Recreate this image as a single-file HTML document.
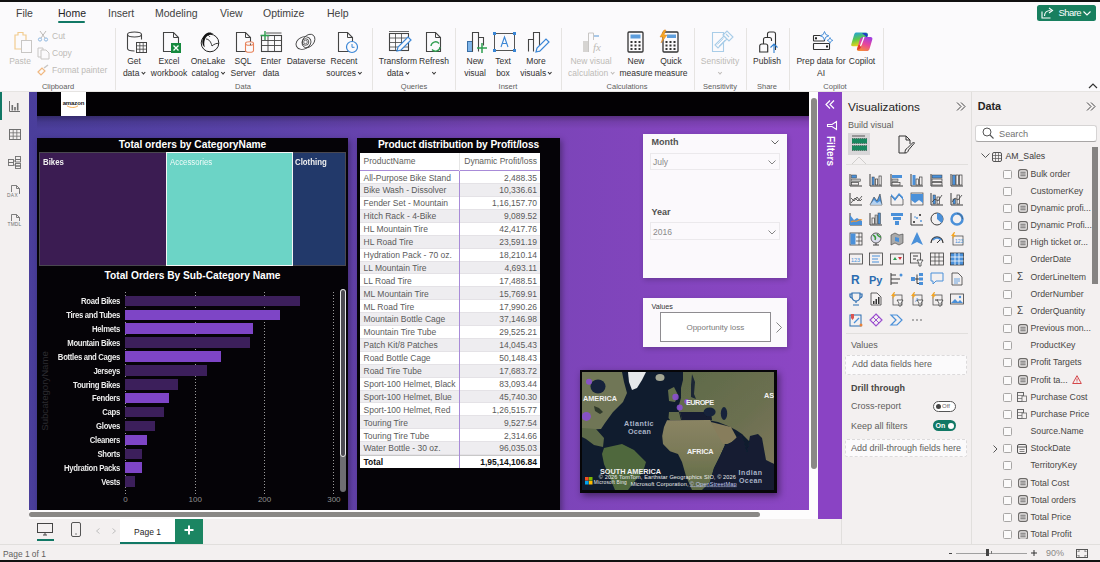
<!DOCTYPE html>
<html><head><meta charset="utf-8">
<style>
*{box-sizing:border-box;margin:0;padding:0}
html,body{width:1100px;height:562px;overflow:hidden;background:#f3f0f0;font-family:"Liberation Sans",sans-serif;color:#252423}
.a{position:absolute}
svg{position:absolute;overflow:visible}
#topline{left:0;top:0;width:1100px;height:2px;background:#111}
#menubar{left:0;top:2px;width:1100px;height:23px;background:#fbfafc}
#ribbon{left:0;top:25px;width:1100px;height:67px;background:#fbfafc;border-bottom:1px solid #e6e4e2}
.tab{top:5px;font-size:10.5px;color:#424242}
.rl{position:absolute;font-size:8.5px;color:#323130;text-align:center;line-height:12px;white-space:nowrap;transform:translateX(-50%)}
.rd{color:#bdbab7}
.gl{position:absolute;top:82px;font-size:7.5px;color:#605e5c;white-space:nowrap;transform:translateX(-50%)}
.sep{position:absolute;top:28px;width:1px;height:62px;background:#e6e4e2}
.chev{display:inline-block;width:3.2px;height:3.2px;border-right:1px solid #323130;border-bottom:1px solid #323130;transform:rotate(45deg);margin-left:2.5px;position:relative;top:-2px}
#leftnav{left:0;top:92px;width:29px;height:452px;background:#f3f0f0}
#canvasarea{left:29px;top:92px;width:789px;height:452px;background:#f3f0f0}
#canvas{left:29px;top:92px;width:780px;height:418px;background:linear-gradient(90deg,#4a3e9b 0%,#5a42a8 30%,#7844b6 60%,#8c46c4 100%);overflow:hidden}
#statusbar{left:0;top:544px;width:1100px;height:16px;background:#f3f2f1;border-top:1px solid #e1dfdd}
#botline{left:0;top:560px;width:1100px;height:2px;background:#111}
#filters{left:818px;top:92px;width:24px;height:427px;background:#8a43c4}
#viz{left:842px;top:92px;width:130px;height:452px;background:#f3f0f0;border-left:1px solid #e1dfdd}
#data{left:972px;top:92px;width:128px;height:452px;background:#f3f0f0;border-left:1px solid #e1dfdd}
</style></head><body>
<div class="a" id="topline"></div>
<div class="a" id="menubar">
  <div class="a tab" style="left:16px">File</div>
  <div class="a tab" style="left:58px;color:#242424">Home</div>
  <div class="a" style="left:58px;top:19px;width:27px;height:2px;background:#117865;border-radius:1px"></div>
  <div class="a tab" style="left:108px">Insert</div>
  <div class="a tab" style="left:155px">Modeling</div>
  <div class="a tab" style="left:220px">View</div>
  <div class="a tab" style="left:263px">Optimize</div>
  <div class="a tab" style="left:327px">Help</div>
</div>
<div class="a" style="left:1037px;top:5px;width:59px;height:16px;background:#187f5f;border-radius:2.5px"></div>
<svg style="left:1041px;top:7px" width="13" height="12" viewBox="0 0 13 12"><path d="M1 4.5v6.5h8.5" fill="none" stroke="#fff" stroke-width="1.1"/><path d="M3.5 9c0-3.5 2.5-5.5 6-5.5M8 1l3.5 2.5-3.5 2.5" fill="none" stroke="#fff" stroke-width="1.1"/></svg>
<div class="a" style="left:1058.5px;top:7px;font-size:9.5px;color:#fff;letter-spacing:-0.55px">Share</div>
<svg style="left:1083px;top:11px" width="8" height="5" viewBox="0 0 8 5"><path d="M0.5 0.5l3.5 3.5 3.5-3.5" fill="none" stroke="#fff" stroke-width="1.1"/></svg>
<div class="a" id="ribbon"></div>
<!-- Clipboard -->
<svg style="left:11px;top:31px" width="23" height="23" viewBox="0 0 23 23"><path d="M4 4h3v-2.5h5v2.5h3v14h-11z" fill="none" stroke="#f2cc8f" stroke-width="1.2"/><rect x="10.5" y="9.5" width="10" height="12" fill="#fbfafc" stroke="#c8c6c4" stroke-width="1"/></svg>
<div class="rl rd" style="left:20px;top:55px">Paste</div>
<svg style="left:37px;top:30px" width="12" height="12" viewBox="0 0 12 12"><path d="M3 1l5 7M9 1l-5 7" stroke="#bdbab7" stroke-width="1"/><circle cx="3" cy="9.5" r="1.6" fill="none" stroke="#8fb8e0"/><circle cx="9" cy="9.5" r="1.6" fill="none" stroke="#8fb8e0"/></svg>
<div class="a rd" style="left:52px;top:31px;font-size:8.5px">Cut</div>
<svg style="left:37px;top:47px" width="13" height="12" viewBox="0 0 13 12"><path d="M1 1h5v9h-5z" fill="none" stroke="#c8c6c4"/><path d="M4 3h5l3 3v6h-8z" fill="#fbfafc" stroke="#c8c6c4"/></svg>
<div class="a rd" style="left:52px;top:48px;font-size:8.5px">Copy</div>
<svg style="left:37px;top:64px" width="13" height="12" viewBox="0 0 13 12"><path d="M1 8l4-4 3 3-4 4z" fill="none" stroke="#f0b880" stroke-width="1.2"/><path d="M7 4l4-3" stroke="#c8c6c4" stroke-width="1.5"/></svg>
<div class="a rd" style="left:52px;top:65px;font-size:8.5px">Format painter</div>
<div class="gl" style="left:58px">Clipboard</div>
<div class="sep" style="left:115px"></div>
<!-- Data -->
<svg style="left:126px;top:31px" width="22" height="23" viewBox="0 0 22 23"><path d="M1.5 3.5v14c0 1.5 3 2.5 7 2.5M1.5 3.5c0-1.5 3-2.5 7-2.5s7 1 7 2.5v5M1.5 3.5c0 1.5 3 2.5 7 2.5s7-1 7-2.5" fill="none" stroke="#444" stroke-width="1.1"/><rect x="10.5" y="11.5" width="10" height="10" fill="#fbfafc" stroke="#444"/><path d="M10.5 14.8h10M10.5 18.2h10M13.8 11.5v10M17.2 11.5v10" stroke="#444" stroke-width="0.8"/></svg>
<div class="rl" style="left:134px;top:55px">Get</div>
<div class="rl" style="left:134px;top:67px">data<span class="chev"></span></div>
<svg style="left:162px;top:31px" width="20" height="23" viewBox="0 0 20 23"><path d="M1.5 1.5h10l5 5v14h-15z" fill="none" stroke="#444" stroke-width="1.1"/><path d="M11.5 1.5v5h5" fill="none" stroke="#444"/><rect x="9" y="12" width="10" height="10" fill="#168a3e"/><path d="M11.5 14.5l5 5M16.5 14.5l-5 5" stroke="#fff" stroke-width="1.3"/></svg>
<div class="rl" style="left:169px;top:55px">Excel</div>
<div class="rl" style="left:169px;top:67px">workbook</div>
<svg style="left:199px;top:31px" width="21" height="22" viewBox="0 0 21 22"><circle cx="11" cy="12" r="8.8" fill="none" stroke="#222" stroke-width="1"/><path d="M3.5 8c1-4 4-6.5 7-6.5 1.5 0 3 .6 4 1.3-3.5-.3-7 2-8.5 5.5-1 2.5-1 5.5-.2 8-2-1.5-3-4-2.3-8.3z" fill="#111"/><path d="M7 8c3 0 5 3 6 7M13 15c2-2 5-3 6.5-2.5M8 4c1 0 2.5 1 3 2" fill="none" stroke="#222" stroke-width="0.9"/></svg>
<div class="rl" style="left:208px;top:55px">OneLake</div>
<div class="rl" style="left:208px;top:67px">catalog<span class="chev"></span></div>
<svg style="left:235px;top:31px" width="21" height="23" viewBox="0 0 21 23"><path d="M1.5 1.5h9l5 5v14h-14z" fill="none" stroke="#444" stroke-width="1.1"/><path d="M10.5 1.5v5h5" fill="none" stroke="#444"/><path d="M10.5 12.5v7c0 1 1.8 1.8 4 1.8s4-.8 4-1.8v-7M10.5 12.5c0-1 1.8-1.8 4-1.8s4 .8 4 1.8-1.8 1.8-4 1.8-4-.8-4-1.8z" fill="#fbfafc" stroke="#e8825a" stroke-width="1.1"/></svg>
<div class="rl" style="left:243px;top:55px">SQL</div>
<div class="rl" style="left:243px;top:67px">Server</div>
<svg style="left:260px;top:30px" width="23" height="23" viewBox="0 0 23 23"><rect x="1.5" y="5.5" width="20" height="16" fill="none" stroke="#444" stroke-width="1.1"/><path d="M1.5 10.5h20M1.5 15.5h20M8 5.5v16M14.5 5.5v16M6 3h15.5" stroke="#444" stroke-width="0.9"/><path d="M5 1v9M0.5 5.5h9" stroke="#2e9e4f" stroke-width="1.4"/></svg>
<div class="rl" style="left:271px;top:55px">Enter</div>
<div class="rl" style="left:271px;top:67px">data</div>
<svg style="left:295px;top:33px" width="22" height="18" viewBox="0 0 22 18"><ellipse cx="8.5" cy="10" rx="7.8" ry="6" transform="rotate(-25 8.5 10)" fill="none" stroke="#444" stroke-width="0.9"/><ellipse cx="13.5" cy="8" rx="7.5" ry="5.5" transform="rotate(-50 13.5 8)" fill="none" stroke="#444" stroke-width="0.9"/><circle cx="10.5" cy="9" r="3.3" fill="none" stroke="#444" stroke-width="0.9"/><circle cx="10.5" cy="9" r="1.8" fill="none" stroke="#444" stroke-width="0.7"/></svg>
<div class="rl" style="left:306px;top:55px">Dataverse</div>
<svg style="left:337px;top:31px" width="22" height="23" viewBox="0 0 22 23"><path d="M1.5 1.5h9l5 5v14h-14z" fill="none" stroke="#444" stroke-width="1.1"/><path d="M10.5 1.5v5h5" fill="none" stroke="#444"/><circle cx="15" cy="16" r="5.5" fill="#fbfafc" stroke="#3a86d6" stroke-width="1.2"/><path d="M15 13v3.3h2.5" fill="none" stroke="#3a86d6" stroke-width="1"/></svg>
<div class="rl" style="left:344px;top:55px">Recent</div>
<div class="rl" style="left:344px;top:67px">sources<span class="chev"></span></div>
<div class="gl" style="left:243px">Data</div>
<div class="sep" style="left:372px"></div>
<!-- Queries -->
<svg style="left:388px;top:30px" width="23" height="23" viewBox="0 0 23 23"><rect x="1.5" y="3.5" width="19" height="17" fill="none" stroke="#444" stroke-width="1.1"/><path d="M1.5 8h19M1.5 12.5h19M1.5 17h19M7.5 3.5v17M13.5 3.5v17M1 1.5h20" stroke="#444" stroke-width="0.8"/><path d="M9 21l1-4 10-10 3 3-10 10z" fill="#fbfafc" stroke="#3a86d6" stroke-width="1.2"/></svg>
<div class="rl" style="left:398px;top:55px">Transform</div>
<div class="rl" style="left:398px;top:67px">data<span class="chev"></span></div>
<svg style="left:425px;top:31px" width="17" height="23" viewBox="0 0 17 23"><path d="M1.5 1.5h9l5 5v14h-14z" fill="none" stroke="#444" stroke-width="1.1"/><path d="M10.5 1.5v5h5" fill="none" stroke="#444"/><path d="M6 15a4.5 4.5 0 0 1 8-2.5M15 16a4.5 4.5 0 0 1-8 2.5" fill="none" stroke="#2e9e4f" stroke-width="1.3"/></svg>
<div class="rl" style="left:434px;top:55px">Refresh</div>
<div class="rl" style="left:434px;top:67px"><span class="chev" style="margin-left:0"></span></div>
<div class="gl" style="left:414px">Queries</div>
<div class="sep" style="left:455px"></div>
<!-- Insert -->
<svg style="left:466px;top:31px" width="22" height="22" viewBox="0 0 22 22"><rect x="1.5" y="10.5" width="5" height="10" fill="#7fb5ea" stroke="#3a6ea5"/><path d="M6.5 20.5v-19h6v19M12.5 6.5h5v8" fill="none" stroke="#444" stroke-width="1.1"/><path d="M16 12v10M11 17h10" stroke="#2e9e4f" stroke-width="1.5"/></svg>
<div class="rl" style="left:475px;top:55px">New</div>
<div class="rl" style="left:475px;top:67px">visual</div>
<svg style="left:493px;top:32px" width="23" height="20" viewBox="0 0 23 20"><rect x="1.5" y="1.5" width="20" height="17" fill="none" stroke="#555" stroke-width="1"/><rect x="0" y="0" width="3" height="3" fill="#3a86d6"/><rect x="20" y="0" width="3" height="3" fill="#3a86d6"/><rect x="0" y="17" width="3" height="3" fill="#3a86d6"/><rect x="20" y="17" width="3" height="3" fill="#3a86d6"/><path d="M8 15l3.5-10 3.5 10M9.3 11.5h4.4" fill="none" stroke="#3a86d6" stroke-width="1.1"/></svg>
<div class="rl" style="left:503px;top:55px">Text</div>
<div class="rl" style="left:503px;top:67px">box</div>
<svg style="left:527px;top:31px" width="22" height="22" viewBox="0 0 22 22"><path d="M1.5 20.5v-12h5v12M6.5 20.5v-19h6v19" fill="none" stroke="#444" stroke-width="1.1"/><path d="M9 21l1-4 9-9 3 3-9 9z" fill="#fbfafc" stroke="#3a86d6" stroke-width="1.2"/></svg>
<div class="rl" style="left:536px;top:55px">More</div>
<div class="rl" style="left:536px;top:67px">visuals<span class="chev"></span></div>
<div class="gl" style="left:508px">Insert</div>
<div class="sep" style="left:561px"></div>
<!-- Calculations -->
<svg style="left:582px;top:31px" width="23" height="22" viewBox="0 0 23 22"><rect x="1" y="10" width="5" height="11" fill="#d6d4d2"/><path d="M6.5 21v-19h5v7" fill="none" stroke="#c8c6c4"/><rect x="12" y="4" width="5" height="2" fill="#a9c8e8"/><text x="11" y="20" font-family="Liberation Serif" font-style="italic" font-size="11" fill="#bdbab7">fx</text></svg>
<div class="rl rd" style="left:591px;top:55px">New visual</div>
<div class="rl rd" style="left:591px;top:67px">calculation<span class="chev" style="border-color:#bdbab7"></span></div>
<svg style="left:627px;top:31px" width="17" height="22" viewBox="0 0 17 22"><rect x="1" y="1" width="15" height="20" rx="1" fill="none" stroke="#333" stroke-width="1.3"/><rect x="3.5" y="3.5" width="10" height="4" fill="#5d9ddc"/><g fill="#333"><rect x="3.5" y="10" width="2" height="2"/><rect x="7.5" y="10" width="2" height="2"/><rect x="11.5" y="10" width="2" height="2"/><rect x="3.5" y="13.5" width="2" height="2"/><rect x="7.5" y="13.5" width="2" height="2"/><rect x="11.5" y="13.5" width="2" height="2"/><rect x="3.5" y="17" width="2" height="2"/><rect x="7.5" y="17" width="2" height="2"/><rect x="11.5" y="17" width="2" height="2"/></g></svg>
<div class="rl" style="left:636px;top:55px">New</div>
<div class="rl" style="left:636px;top:67px">measure</div>
<svg style="left:659px;top:30px" width="20" height="23" viewBox="0 0 20 23"><rect x="4" y="2" width="15" height="20" rx="1" fill="none" stroke="#333" stroke-width="1.3"/><g fill="#333"><rect x="6.5" y="11" width="2" height="2"/><rect x="10.5" y="11" width="2" height="2"/><rect x="14.5" y="11" width="2" height="2"/><rect x="6.5" y="14.5" width="2" height="2"/><rect x="10.5" y="14.5" width="2" height="2"/><rect x="14.5" y="14.5" width="2" height="2"/><rect x="6.5" y="18" width="2" height="2"/><rect x="10.5" y="18" width="2" height="2"/><rect x="14.5" y="18" width="2" height="2"/></g><rect x="8" y="4.5" width="9" height="3.5" fill="#5d9ddc"/><path d="M5 0l-4 7h3l-2 6 6-8h-3l2-5z" fill="#f5a623" stroke="#d9822b" stroke-width="0.5"/></svg>
<div class="rl" style="left:671px;top:55px">Quick</div>
<div class="rl" style="left:671px;top:67px">measure</div>
<div class="gl" style="left:627px">Calculations</div>
<div class="sep" style="left:694px"></div>
<svg style="left:711px;top:30px" width="23" height="23" viewBox="0 0 23 23"><path d="M1.5 2.5h11v19h-11z" fill="none" stroke="#a9cde8" stroke-width="1.1"/><path d="M4 15l9-9 3 3-9 9z" fill="#fbfafc" stroke="#a9cde8" stroke-width="1.1"/><path d="M6.5 14.5l6-6M8 16l6-6" stroke="#a9cde8" stroke-width="0.8"/><path d="M12 5l4-4 6 6-4 4z" fill="#fbfafc" stroke="#a9cde8" stroke-width="1.1"/><path d="M15 4l3 3" stroke="#a9cde8" stroke-width="1.1"/></svg>
<div class="rl rd" style="left:720px;top:55px">Sensitivity</div>
<div class="rl rd" style="left:720px;top:67px"><span class="chev" style="margin-left:0;border-color:#bdbab7"></span></div>
<div class="gl" style="left:720px">Sensitivity</div>
<div class="sep" style="left:746px"></div>
<svg style="left:759px;top:31px" width="21" height="22" viewBox="0 0 21 22"><path d="M8.5 21V3a2 2 0 0 1 2-2h4a2 2 0 0 1 2 2v16" fill="none" stroke="#333" stroke-width="1.1"/><path d="M4.5 21V8.5a2 2 0 0 1 2-2h4a2 2 0 0 1 2 2V10" fill="#fbfafc" stroke="#333" stroke-width="1.1"/><path d="M0.7 21v-6a2 2 0 0 1 2-2h4a2 2 0 0 1 2 2v6z" fill="#fbfafc" stroke="#333" stroke-width="1.1"/><path d="M15 22V13M11.5 16.5L15 13l3.5 3.5" fill="none" stroke="#2f7fd1" stroke-width="1.1"/></svg>
<div class="rl" style="left:767px;top:55px">Publish</div>
<div class="gl" style="left:767px">Share</div>
<div class="sep" style="left:789px"></div>
<svg style="left:812px;top:31px" width="22" height="21" viewBox="0 0 22 21"><rect x="1.5" y="4.5" width="11" height="5.5" rx="0.5" fill="none" stroke="#333" stroke-width="1.1"/><rect x="1.5" y="12.5" width="16" height="6" rx="0.5" fill="none" stroke="#333" stroke-width="1.1"/><rect x="3" y="6.3" width="2" height="2" fill="#222"/><rect x="14" y="14.5" width="2" height="2" fill="#222"/><path d="M12.5 0.5l1.3 3 3 1.3-3 1.3-1.3 3-1.3-3-3-1.3 3-1.3z" fill="#fbfafc" stroke="#3a86d6" stroke-width="0.9"/><path d="M18 6.5l.9 2 2 .9-2 .9-.9 2-.9-2-2-.9 2-.9z" fill="#fbfafc" stroke="#3a86d6" stroke-width="0.8"/></svg>
<div class="rl" style="left:821px;top:55px">Prep data for</div>
<div class="rl" style="left:821px;top:67px">AI</div>
<svg style="left:851px;top:32px" width="22" height="20" viewBox="0 0 22 20"><defs><linearGradient id="cpa" x1="0" y1="0" x2="0.3" y2="1"><stop offset="0" stop-color="#1a9ee8"/><stop offset="0.55" stop-color="#5ec84a"/><stop offset="1" stop-color="#f0d41a"/></linearGradient><linearGradient id="cpb" x1="0.7" y1="0" x2="0.3" y2="1"><stop offset="0" stop-color="#a13ee0"/><stop offset="0.5" stop-color="#e8469a"/><stop offset="1" stop-color="#f58a3a"/></linearGradient></defs><path d="M5 0.5h9.5c2 0 2.8 1.2 2.2 3L13.5 12c-.6 1.6-1.6 2.3-3.2 2.3H1.8c-1.3 0-1.9-.8-1.5-2L3 3c.5-1.6 1-2.5 2-2.5z" fill="url(#cpa)"/><path d="M11 1l3.5 0c1.5 0 2.5 1 2.2 2.5l-.7 2z" fill="#1b3fc4"/><path d="M13 5h6.5c1.5 0 2.2 1 1.8 2.4L18.5 17c-.5 1.4-1.3 2-2.8 2H7.8c-1.6 0-2.2-.9-1.8-2.2L8.7 8c.6-2 2-3 4.3-3z" fill="url(#cpb)"/><path d="M6 17.5l1.5-4.5 3.5 0c-1 3-2.5 5.5-5 4.5z" fill="#e83a2a"/><path d="M9.5 14.3l3.5-9.3" stroke="#fbfafc" stroke-width="1.3"/></svg>
<div class="rl" style="left:862px;top:55px">Copilot</div>
<div class="gl" style="left:835px">Copilot</div>
<div class="sep" style="left:883px"></div>
<svg style="left:1088px;top:83px" width="10" height="6" viewBox="0 0 10 6"><path d="M1 5l4-4 4 4" fill="none" stroke="#333" stroke-width="1.2"/></svg>
<div class="a" id="leftnav"></div>
<div class="a" style="left:0;top:92px;width:2px;height:28px;background:#117865"></div>
<svg style="left:9px;top:101px" width="11" height="11" viewBox="0 0 11 11"><path d="M0.5 0v10.5H11" fill="none" stroke="#6e6e6e" stroke-width="1"/><rect x="2.5" y="4" width="1.6" height="5.5" fill="#6e6e6e"/><rect x="5.2" y="6" width="1.6" height="3.5" fill="#6e6e6e"/><rect x="7.9" y="2" width="1.6" height="7.5" fill="#6e6e6e"/></svg>
<svg style="left:9px;top:129px" width="12" height="11" viewBox="0 0 12 11"><rect x="0.5" y="0.5" width="11" height="10" fill="none" stroke="#707070"/><path d="M0.5 3.8h11M0.5 7.2h11M4.2 0.5v10M7.8 0.5v10" stroke="#707070" stroke-width="0.8"/></svg>
<svg style="left:8px;top:156px" width="13" height="13" viewBox="0 0 13 13"><rect x="0.5" y="3.5" width="5" height="3" fill="none" stroke="#707070" stroke-width="0.9"/><rect x="0.5" y="6.5" width="5" height="3" fill="none" stroke="#707070" stroke-width="0.9"/><rect x="7.5" y="0.5" width="5" height="3" fill="none" stroke="#707070" stroke-width="0.9"/><rect x="7.5" y="3.5" width="5" height="2.5" fill="none" stroke="#707070" stroke-width="0.9"/><rect x="7.5" y="7.5" width="5" height="2.5" fill="none" stroke="#707070" stroke-width="0.9"/><rect x="7.5" y="10" width="5" height="2.5" fill="none" stroke="#707070" stroke-width="0.9"/><path d="M5.5 5h2M5.5 9h2" stroke="#707070" stroke-width="0.9"/></svg>
<svg style="left:9px;top:185px" width="12" height="13" viewBox="0 0 12 13"><path d="M2.5 7V0.5h5l3 3V8M10.5 6v3" fill="none" stroke="#707070" stroke-width="0.9"/><path d="M7.5 0.5v3h3" fill="none" stroke="#707070" stroke-width="0.9"/></svg>
<div class="a" style="left:7px;top:192.5px;font-size:4.8px;color:#707070;letter-spacing:0.4px;line-height:5px">DAX</div>
<svg style="left:9px;top:214px" width="12" height="13" viewBox="0 0 12 13"><path d="M2.5 7V0.5h5l3 3V7" fill="none" stroke="#707070" stroke-width="0.9"/><path d="M7.5 0.5v3h3" fill="none" stroke="#707070" stroke-width="0.9"/></svg>
<div class="a" style="left:7.5px;top:221.5px;font-size:4.8px;color:#707070;letter-spacing:0.2px;line-height:5px">TMDL</div>
<div class="a" id="canvasarea"></div>
<div class="a" id="canvas">
<div class="a" style="left:8px;top:0;width:772px;height:24px;background:#030104"></div>
<div class="a" style="left:32px;top:0;width:25px;height:24px;background:#fff"></div>
<div class="a" style="left:33px;top:7.5px;width:23px;font-size:6px;font-weight:bold;color:#1a1a1a;text-align:center;letter-spacing:-0.1px;line-height:7px">amazon</div>
<svg style="left:37px;top:13px" width="15" height="4" viewBox="0 0 15 4"><path d="M1 0.8c3.5 2.2 8 2.2 11 0" fill="none" stroke="#f5a03a" stroke-width="0.9"/></svg>
<div class="a" style="left:8px;top:24px;width:772px;height:13px;background:linear-gradient(#00000050,#00000018 45%,#00000000)"></div>
<div class="a" style="left:8px;top:46px;width:311px;height:380px;background:#050307;box-shadow:2px 2px 6px rgba(0,0,0,0.35)"></div>
<div class="a" style="left:8px;top:47px;width:311px;text-align:center;font-size:10.2px;font-weight:bold;color:#fff">Total orders by CategoryName</div>
<div class="a" style="left:10px;top:60px;width:307px;height:114px;border:1px solid #4a4850;background:#050307"></div>
<div class="a" style="left:11px;top:61px;width:126px;height:112px;background:#3b1c52"></div>
<div class="a" style="left:137px;top:60px;width:127px;height:114px;background:#6cd4c6;border:1px solid #f4f4f4"></div>
<div class="a" style="left:264px;top:61px;width:52px;height:112px;background:#22396a"></div>
<div class="a" style="left:14px;top:65px;font-size:8.5px;font-weight:bold;color:#f0f0f0;transform:scaleX(0.92);transform-origin:left">Bikes</div>
<div class="a" style="left:141px;top:65px;font-size:8.5px;color:#f0fbf9;transform:scaleX(0.92);transform-origin:left">Accessories</div>
<div class="a" style="left:266px;top:65px;font-size:8.5px;font-weight:bold;color:#f0f0f0;transform:scaleX(0.92);transform-origin:left">Clothing</div>
<div class="a" style="left:8px;top:178px;width:311px;text-align:center;font-size:10.2px;font-weight:bold;color:#fff">Total Orders By Sub-Category Name</div>
<div class="a" style="left:96.0px;top:200px;width:1px;height:202px;background:repeating-linear-gradient(#9a9a9a 0 1px,transparent 1px 3px)"></div>
<div class="a" style="left:165.8px;top:200px;width:1px;height:202px;background:repeating-linear-gradient(#9a9a9a 0 1px,transparent 1px 3px)"></div>
<div class="a" style="left:235.1px;top:200px;width:1px;height:202px;background:repeating-linear-gradient(#9a9a9a 0 1px,transparent 1px 3px)"></div>
<div class="a" style="left:304.4px;top:200px;width:1px;height:202px;background:repeating-linear-gradient(#9a9a9a 0 1px,transparent 1px 3px)"></div>
<div class="a" style="left:96px;top:203.6px;width:175.0px;height:10.6px;background:#3c1f5b"></div>
<div class="a" style="left:11px;top:204.1px;width:80px;text-align:right;font-size:8.6px;color:#ececec;white-space:nowrap;letter-spacing:-0.35px;font-weight:bold;line-height:10px;transform:scaleX(0.9);transform-origin:right">Road Bikes</div>
<div class="a" style="left:96px;top:217.5px;width:154.7px;height:10.6px;background:#7e45c6"></div>
<div class="a" style="left:11px;top:218.0px;width:80px;text-align:right;font-size:8.6px;color:#ececec;white-space:nowrap;letter-spacing:-0.35px;font-weight:bold;line-height:10px;transform:scaleX(0.9);transform-origin:right">Tires and Tubes</div>
<div class="a" style="left:96px;top:231.4px;width:128.0px;height:10.6px;background:#7e45c6"></div>
<div class="a" style="left:11px;top:231.9px;width:80px;text-align:right;font-size:8.6px;color:#ececec;white-space:nowrap;letter-spacing:-0.35px;font-weight:bold;line-height:10px;transform:scaleX(0.9);transform-origin:right">Helmets</div>
<div class="a" style="left:96px;top:245.3px;width:125.4px;height:10.6px;background:#3c1f5b"></div>
<div class="a" style="left:11px;top:245.8px;width:80px;text-align:right;font-size:8.6px;color:#ececec;white-space:nowrap;letter-spacing:-0.35px;font-weight:bold;line-height:10px;transform:scaleX(0.9);transform-origin:right">Mountain Bikes</div>
<div class="a" style="left:96px;top:259.2px;width:95.6px;height:10.6px;background:#7e45c6"></div>
<div class="a" style="left:11px;top:259.7px;width:80px;text-align:right;font-size:8.6px;color:#ececec;white-space:nowrap;letter-spacing:-0.35px;font-weight:bold;line-height:10px;transform:scaleX(0.9);transform-origin:right">Bottles and Cages</div>
<div class="a" style="left:96px;top:273.1px;width:82.3px;height:10.6px;background:#3c1f5b"></div>
<div class="a" style="left:11px;top:273.6px;width:80px;text-align:right;font-size:8.6px;color:#ececec;white-space:nowrap;letter-spacing:-0.35px;font-weight:bold;line-height:10px;transform:scaleX(0.9);transform-origin:right">Jerseys</div>
<div class="a" style="left:96px;top:287.0px;width:53.3px;height:10.6px;background:#3c1f5b"></div>
<div class="a" style="left:11px;top:287.5px;width:80px;text-align:right;font-size:8.6px;color:#ececec;white-space:nowrap;letter-spacing:-0.35px;font-weight:bold;line-height:10px;transform:scaleX(0.9);transform-origin:right">Touring Bikes</div>
<div class="a" style="left:96px;top:300.9px;width:44.3px;height:10.6px;background:#7e45c6"></div>
<div class="a" style="left:11px;top:301.4px;width:80px;text-align:right;font-size:8.6px;color:#ececec;white-space:nowrap;letter-spacing:-0.35px;font-weight:bold;line-height:10px;transform:scaleX(0.9);transform-origin:right">Fenders</div>
<div class="a" style="left:96px;top:314.8px;width:39.2px;height:10.6px;background:#3c1f5b"></div>
<div class="a" style="left:11px;top:315.3px;width:80px;text-align:right;font-size:8.6px;color:#ececec;white-space:nowrap;letter-spacing:-0.35px;font-weight:bold;line-height:10px;transform:scaleX(0.9);transform-origin:right">Caps</div>
<div class="a" style="left:96px;top:328.7px;width:30.2px;height:10.6px;background:#3c1f5b"></div>
<div class="a" style="left:11px;top:329.2px;width:80px;text-align:right;font-size:8.6px;color:#ececec;white-space:nowrap;letter-spacing:-0.35px;font-weight:bold;line-height:10px;transform:scaleX(0.9);transform-origin:right">Gloves</div>
<div class="a" style="left:96px;top:342.6px;width:21.6px;height:10.6px;background:#7e45c6"></div>
<div class="a" style="left:11px;top:343.1px;width:80px;text-align:right;font-size:8.6px;color:#ececec;white-space:nowrap;letter-spacing:-0.35px;font-weight:bold;line-height:10px;transform:scaleX(0.9);transform-origin:right">Cleaners</div>
<div class="a" style="left:96px;top:356.5px;width:17.3px;height:10.6px;background:#3c1f5b"></div>
<div class="a" style="left:11px;top:357.0px;width:80px;text-align:right;font-size:8.6px;color:#ececec;white-space:nowrap;letter-spacing:-0.35px;font-weight:bold;line-height:10px;transform:scaleX(0.9);transform-origin:right">Shorts</div>
<div class="a" style="left:96px;top:370.4px;width:16.5px;height:10.6px;background:#7e45c6"></div>
<div class="a" style="left:11px;top:370.9px;width:80px;text-align:right;font-size:8.6px;color:#ececec;white-space:nowrap;letter-spacing:-0.35px;font-weight:bold;line-height:10px;transform:scaleX(0.9);transform-origin:right">Hydration Packs</div>
<div class="a" style="left:96px;top:384.3px;width:9.9px;height:10.6px;background:#3c1f5b"></div>
<div class="a" style="left:11px;top:384.8px;width:80px;text-align:right;font-size:8.6px;color:#ececec;white-space:nowrap;letter-spacing:-0.35px;font-weight:bold;line-height:10px;transform:scaleX(0.9);transform-origin:right">Vests</div>
<div class="a" style="left:76.5px;top:403px;width:40px;text-align:center;font-size:8px;color:#8f8f8f">0</div>
<div class="a" style="left:146.3px;top:403px;width:40px;text-align:center;font-size:8px;color:#8f8f8f">100</div>
<div class="a" style="left:215.6px;top:403px;width:40px;text-align:center;font-size:8px;color:#8f8f8f">200</div>
<div class="a" style="left:284.9px;top:403px;width:40px;text-align:center;font-size:8px;color:#8f8f8f">300</div>
<div class="a" style="left:16px;top:299px;font-size:9.6px;line-height:10px;color:#2c2b30;transform:translate(-50%,-50%) rotate(-90deg);transform-origin:center;white-space:nowrap">SubcategoryName</div>
<div class="a" style="left:310.5px;top:197px;width:6px;height:203px;border-radius:3px;background:#6e6e72"></div>
<div class="a" style="left:310.5px;top:197px;width:6px;height:168px;border-radius:3px;background:#4d4b52;border:1px solid #e8e8e8"></div>
<div class="a" style="left:328px;top:46px;width:203px;height:380px;background:#050307;box-shadow:2px 2px 6px rgba(0,0,0,0.35)"></div>
<div class="a" style="left:328px;top:47px;width:203px;text-align:center;font-size:10.2px;font-weight:bold;color:#fff;letter-spacing:-0.1px">Product distribution by Profit/loss</div>
<div class="a" style="left:331px;top:60.8px;width:180px;height:315.2px;background:#fff"></div>
<div class="a" style="left:331px;top:60.8px;width:180px;height:18.5px;border-bottom:1px solid #a88bd8"></div>
<div class="a" style="left:334.5px;top:63.5px;font-size:8.5px;color:#605e5c">ProductName</div>
<div class="a" style="left:430px;top:60.8px;width:1px;height:18.5px;background:#e6e6e6"></div>
<div class="a" style="left:430px;top:63.5px;width:78px;text-align:right;font-size:8.5px;color:#605e5c">Dynamic Profit/loss</div>
<div class="a" style="left:331px;top:79.3px;width:180px;height:12.9px;background:#ffffff;border-bottom:1px solid #e4e2e6"></div>
<div class="a" style="left:334.5px;top:80.5px;font-size:8.5px;color:#5a5a5a;white-space:nowrap;line-height:11px">All-Purpose Bike Stand</div>
<div class="a" style="left:430px;top:80.5px;width:78px;text-align:right;font-size:8.5px;color:#5a5a5a;line-height:11px">2,488.35</div>
<div class="a" style="left:331px;top:92.2px;width:180px;height:12.9px;background:#eeedf0;border-bottom:1px solid #e4e2e6"></div>
<div class="a" style="left:334.5px;top:93.4px;font-size:8.5px;color:#5a5a5a;white-space:nowrap;line-height:11px">Bike Wash - Dissolver</div>
<div class="a" style="left:430px;top:93.4px;width:78px;text-align:right;font-size:8.5px;color:#5a5a5a;line-height:11px">10,336.61</div>
<div class="a" style="left:331px;top:105.1px;width:180px;height:12.9px;background:#ffffff;border-bottom:1px solid #e4e2e6"></div>
<div class="a" style="left:334.5px;top:106.3px;font-size:8.5px;color:#5a5a5a;white-space:nowrap;line-height:11px">Fender Set - Mountain</div>
<div class="a" style="left:430px;top:106.3px;width:78px;text-align:right;font-size:8.5px;color:#5a5a5a;line-height:11px">1,16,157.70</div>
<div class="a" style="left:331px;top:118.0px;width:180px;height:12.9px;background:#eeedf0;border-bottom:1px solid #e4e2e6"></div>
<div class="a" style="left:334.5px;top:119.2px;font-size:8.5px;color:#5a5a5a;white-space:nowrap;line-height:11px">Hitch Rack - 4-Bike</div>
<div class="a" style="left:430px;top:119.2px;width:78px;text-align:right;font-size:8.5px;color:#5a5a5a;line-height:11px">9,089.52</div>
<div class="a" style="left:331px;top:130.9px;width:180px;height:12.9px;background:#ffffff;border-bottom:1px solid #e4e2e6"></div>
<div class="a" style="left:334.5px;top:132.1px;font-size:8.5px;color:#5a5a5a;white-space:nowrap;line-height:11px">HL Mountain Tire</div>
<div class="a" style="left:430px;top:132.1px;width:78px;text-align:right;font-size:8.5px;color:#5a5a5a;line-height:11px">42,417.76</div>
<div class="a" style="left:331px;top:143.8px;width:180px;height:12.9px;background:#eeedf0;border-bottom:1px solid #e4e2e6"></div>
<div class="a" style="left:334.5px;top:145.0px;font-size:8.5px;color:#5a5a5a;white-space:nowrap;line-height:11px">HL Road Tire</div>
<div class="a" style="left:430px;top:145.0px;width:78px;text-align:right;font-size:8.5px;color:#5a5a5a;line-height:11px">23,591.19</div>
<div class="a" style="left:331px;top:156.7px;width:180px;height:12.9px;background:#ffffff;border-bottom:1px solid #e4e2e6"></div>
<div class="a" style="left:334.5px;top:157.9px;font-size:8.5px;color:#5a5a5a;white-space:nowrap;line-height:11px">Hydration Pack - 70 oz.</div>
<div class="a" style="left:430px;top:157.9px;width:78px;text-align:right;font-size:8.5px;color:#5a5a5a;line-height:11px">18,210.14</div>
<div class="a" style="left:331px;top:169.6px;width:180px;height:12.9px;background:#eeedf0;border-bottom:1px solid #e4e2e6"></div>
<div class="a" style="left:334.5px;top:170.8px;font-size:8.5px;color:#5a5a5a;white-space:nowrap;line-height:11px">LL Mountain Tire</div>
<div class="a" style="left:430px;top:170.8px;width:78px;text-align:right;font-size:8.5px;color:#5a5a5a;line-height:11px">4,693.11</div>
<div class="a" style="left:331px;top:182.5px;width:180px;height:12.9px;background:#ffffff;border-bottom:1px solid #e4e2e6"></div>
<div class="a" style="left:334.5px;top:183.7px;font-size:8.5px;color:#5a5a5a;white-space:nowrap;line-height:11px">LL Road Tire</div>
<div class="a" style="left:430px;top:183.7px;width:78px;text-align:right;font-size:8.5px;color:#5a5a5a;line-height:11px">17,488.51</div>
<div class="a" style="left:331px;top:195.4px;width:180px;height:12.9px;background:#eeedf0;border-bottom:1px solid #e4e2e6"></div>
<div class="a" style="left:334.5px;top:196.6px;font-size:8.5px;color:#5a5a5a;white-space:nowrap;line-height:11px">ML Mountain Tire</div>
<div class="a" style="left:430px;top:196.6px;width:78px;text-align:right;font-size:8.5px;color:#5a5a5a;line-height:11px">15,769.91</div>
<div class="a" style="left:331px;top:208.3px;width:180px;height:12.9px;background:#ffffff;border-bottom:1px solid #e4e2e6"></div>
<div class="a" style="left:334.5px;top:209.5px;font-size:8.5px;color:#5a5a5a;white-space:nowrap;line-height:11px">ML Road Tire</div>
<div class="a" style="left:430px;top:209.5px;width:78px;text-align:right;font-size:8.5px;color:#5a5a5a;line-height:11px">17,990.26</div>
<div class="a" style="left:331px;top:221.2px;width:180px;height:12.9px;background:#eeedf0;border-bottom:1px solid #e4e2e6"></div>
<div class="a" style="left:334.5px;top:222.4px;font-size:8.5px;color:#5a5a5a;white-space:nowrap;line-height:11px">Mountain Bottle Cage</div>
<div class="a" style="left:430px;top:222.4px;width:78px;text-align:right;font-size:8.5px;color:#5a5a5a;line-height:11px">37,146.98</div>
<div class="a" style="left:331px;top:234.1px;width:180px;height:12.9px;background:#ffffff;border-bottom:1px solid #e4e2e6"></div>
<div class="a" style="left:334.5px;top:235.3px;font-size:8.5px;color:#5a5a5a;white-space:nowrap;line-height:11px">Mountain Tire Tube</div>
<div class="a" style="left:430px;top:235.3px;width:78px;text-align:right;font-size:8.5px;color:#5a5a5a;line-height:11px">29,525.21</div>
<div class="a" style="left:331px;top:247.0px;width:180px;height:12.9px;background:#eeedf0;border-bottom:1px solid #e4e2e6"></div>
<div class="a" style="left:334.5px;top:248.2px;font-size:8.5px;color:#5a5a5a;white-space:nowrap;line-height:11px">Patch Kit/8 Patches</div>
<div class="a" style="left:430px;top:248.2px;width:78px;text-align:right;font-size:8.5px;color:#5a5a5a;line-height:11px">14,045.43</div>
<div class="a" style="left:331px;top:259.9px;width:180px;height:12.9px;background:#ffffff;border-bottom:1px solid #e4e2e6"></div>
<div class="a" style="left:334.5px;top:261.1px;font-size:8.5px;color:#5a5a5a;white-space:nowrap;line-height:11px">Road Bottle Cage</div>
<div class="a" style="left:430px;top:261.1px;width:78px;text-align:right;font-size:8.5px;color:#5a5a5a;line-height:11px">50,148.43</div>
<div class="a" style="left:331px;top:272.8px;width:180px;height:12.9px;background:#eeedf0;border-bottom:1px solid #e4e2e6"></div>
<div class="a" style="left:334.5px;top:274.0px;font-size:8.5px;color:#5a5a5a;white-space:nowrap;line-height:11px">Road Tire Tube</div>
<div class="a" style="left:430px;top:274.0px;width:78px;text-align:right;font-size:8.5px;color:#5a5a5a;line-height:11px">17,683.72</div>
<div class="a" style="left:331px;top:285.7px;width:180px;height:12.9px;background:#ffffff;border-bottom:1px solid #e4e2e6"></div>
<div class="a" style="left:334.5px;top:286.9px;font-size:8.5px;color:#5a5a5a;white-space:nowrap;line-height:11px">Sport-100 Helmet, Black</div>
<div class="a" style="left:430px;top:286.9px;width:78px;text-align:right;font-size:8.5px;color:#5a5a5a;line-height:11px">83,093.44</div>
<div class="a" style="left:331px;top:298.6px;width:180px;height:12.9px;background:#eeedf0;border-bottom:1px solid #e4e2e6"></div>
<div class="a" style="left:334.5px;top:299.8px;font-size:8.5px;color:#5a5a5a;white-space:nowrap;line-height:11px">Sport-100 Helmet, Blue</div>
<div class="a" style="left:430px;top:299.8px;width:78px;text-align:right;font-size:8.5px;color:#5a5a5a;line-height:11px">45,740.30</div>
<div class="a" style="left:331px;top:311.5px;width:180px;height:12.9px;background:#ffffff;border-bottom:1px solid #e4e2e6"></div>
<div class="a" style="left:334.5px;top:312.7px;font-size:8.5px;color:#5a5a5a;white-space:nowrap;line-height:11px">Sport-100 Helmet, Red</div>
<div class="a" style="left:430px;top:312.7px;width:78px;text-align:right;font-size:8.5px;color:#5a5a5a;line-height:11px">1,26,515.77</div>
<div class="a" style="left:331px;top:324.4px;width:180px;height:12.9px;background:#eeedf0;border-bottom:1px solid #e4e2e6"></div>
<div class="a" style="left:334.5px;top:325.6px;font-size:8.5px;color:#5a5a5a;white-space:nowrap;line-height:11px">Touring Tire</div>
<div class="a" style="left:430px;top:325.6px;width:78px;text-align:right;font-size:8.5px;color:#5a5a5a;line-height:11px">9,527.54</div>
<div class="a" style="left:331px;top:337.3px;width:180px;height:12.9px;background:#ffffff;border-bottom:1px solid #e4e2e6"></div>
<div class="a" style="left:334.5px;top:338.5px;font-size:8.5px;color:#5a5a5a;white-space:nowrap;line-height:11px">Touring Tire Tube</div>
<div class="a" style="left:430px;top:338.5px;width:78px;text-align:right;font-size:8.5px;color:#5a5a5a;line-height:11px">2,314.66</div>
<div class="a" style="left:331px;top:350.2px;width:180px;height:12.9px;background:#eeedf0;border-bottom:1px solid #e4e2e6"></div>
<div class="a" style="left:334.5px;top:351.4px;font-size:8.5px;color:#5a5a5a;white-space:nowrap;line-height:11px">Water Bottle - 30 oz.</div>
<div class="a" style="left:430px;top:351.4px;width:78px;text-align:right;font-size:8.5px;color:#5a5a5a;line-height:11px">96,035.03</div>
<div class="a" style="left:331px;top:363.1px;width:180px;height:12.9px;background:#fff;border-top:1px solid #c8c8c8"></div>
<div class="a" style="left:334.5px;top:364.6px;font-size:8.5px;font-weight:bold;color:#111;line-height:11px">Total</div>
<div class="a" style="left:430px;top:364.6px;width:78px;text-align:right;font-size:8.5px;font-weight:bold;color:#111;line-height:11px">1,95,14,106.84</div>
<div class="a" style="left:430px;top:79.3px;width:1px;height:296.7px;background:#a88bd8"></div>
<div class="a" style="left:614px;top:41.5px;width:143.5px;height:144.5px;background:#fbf9fc;box-shadow:1px 2px 5px rgba(0,0,0,0.2)"></div>
<div class="a" style="left:622.5px;top:45px;font-size:9px;font-weight:bold;color:#505050">Month</div>
<svg style="left:742px;top:48px" width="8" height="5" viewBox="0 0 8 5"><path d="M0.5 0.5l3.5 3.5 3.5-3.5" fill="none" stroke="#555" stroke-width="0.9"/></svg>
<div class="a" style="left:621px;top:60.5px;width:130px;height:17.5px;border:1px solid #ebe9ec"></div>
<div class="a" style="left:624px;top:65px;font-size:8.5px;color:#8a8a8a">July</div>
<svg style="left:739px;top:68px" width="8" height="5" viewBox="0 0 8 5"><path d="M0.5 0.5l3.5 3.5 3.5-3.5" fill="none" stroke="#777" stroke-width="0.9"/></svg>
<div class="a" style="left:622.5px;top:115px;font-size:9px;font-weight:bold;color:#505050">Year</div>
<div class="a" style="left:621px;top:130.4px;width:130px;height:17.5px;border:1px solid #ebe9ec"></div>
<div class="a" style="left:624px;top:135px;font-size:8.5px;color:#8a8a8a">2016</div>
<svg style="left:739px;top:138px" width="8" height="5" viewBox="0 0 8 5"><path d="M0.5 0.5l3.5 3.5 3.5-3.5" fill="none" stroke="#777" stroke-width="0.9"/></svg>
<div class="a" style="left:614px;top:206.39999999999998px;width:143.5px;height:48.6px;background:#fbf9fc;box-shadow:1px 2px 5px rgba(0,0,0,0.2)"></div>
<div class="a" style="left:622.5px;top:210px;font-size:7.2px;color:#333">Values</div>
<div class="a" style="left:631px;top:220.3px;width:110.7px;height:30.1px;border:1px solid #8e8c90;background:#fff"></div>
<div class="a" style="left:631px;top:231px;width:110.7px;text-align:center;font-size:8px;color:#7a7a7a">Opportunity loss</div>
<svg style="left:747px;top:230px" width="6" height="11" viewBox="0 0 6 11"><path d="M0.5 0.5l5 5-5 5" fill="none" stroke="#777" stroke-width="0.9"/></svg>
<div class="a" style="left:550.5px;top:278px;width:197px;height:122.5px;background:#060608;box-shadow:2px 3px 7px rgba(0,0,0,0.45)"></div>
<svg style="left:553px;top:280px" width="192" height="118" viewBox="0 0 192 118">
<defs><clipPath id="mc"><rect width="192" height="118"/></clipPath>
<linearGradient id="afr" x1="0" y1="0" x2="0" y2="1"><stop offset="0" stop-color="#8a8463"/><stop offset="0.45" stop-color="#7b7a58"/><stop offset="1" stop-color="#5c6a44"/></linearGradient>
<linearGradient id="eur" x1="0" y1="0" x2="1" y2="1"><stop offset="0" stop-color="#5d6a48"/><stop offset="0.6" stop-color="#6b6f50"/><stop offset="1" stop-color="#7d775a"/></linearGradient>
<filter id="bl"><feGaussianBlur stdDeviation="0.6"/></filter></defs>
<g clip-path="url(#mc)">
<rect width="192" height="118" fill="#101c2e"/>

<g filter="url(#bl)">
<path d="M0 0H40L42 10L45 21L41 30L31 40L23 51L19 57L0 58Z" fill="#6f7656"/>
<path d="M0 56L14 57L22 66L21 75L12 73L4 67L0 65Z" fill="#5d6a48"/>
<ellipse cx="16" cy="14.5" rx="7.5" ry="7" fill="#13213a"/>
<path d="M12 34l5 2 4 4-3 2-5-3z" fill="#2e382a"/>
<path d="M46 0H64L60 8L55 16L50 18L47 10Z" fill="#e6e8ea"/>
<ellipse cx="78" cy="5.5" rx="4.5" ry="3.5" fill="#a4a694"/>
<path d="M86 18L92 15L96 23L93 30L87 29Z" fill="#64704c"/>
<path d="M101 0H192V92L184 90L178 82L172 74L166 68L160 62L154 58L146 54L136 50L126 48L112 50L100 48L98 40L87 40L86.5 46L88 48L99 48L96 36L99 26L99 16L101 8Z" fill="url(#eur)"/>
<path d="M110 2l3 8-1 12 2 5-5-2 0-12z" fill="#1a2636"/>
<path d="M98 40L129 40L130 48L112 50L100 48Z" fill="#121e30"/>
<ellipse cx="127.6" cy="40" rx="6" ry="4.5" fill="#16233a"/>
<ellipse cx="142" cy="41.5" rx="3.2" ry="6.5" fill="#16233a"/>
<path d="M85 48.3L128 48L133 56L143 73L138 84L132 96L128 110L120 118L110 118L104 104L100 90L96 82L88 79.3L81 72L80.2 64L82 55Z" fill="url(#afr)"/>
<path d="M129 50L149 55L155 66L147 72L141 72L134 60Z" fill="#877d5c"/>
<path d="M143 73L150 70L156 64L160 62L165 80L168 64L176 62L180 66L184 88L192 92V118H130L128 110L132 96L138 84Z" fill="#121e32"/>
<path d="M22 76L40 72L52 78L64 90L61 100L52 110L46 118L33 118L28 106L22 92L20 82Z" fill="#4f683c"/>
</g>
<circle cx="7" cy="9.7" r="3" fill="#8a4fd0" opacity="0.9"/>
<circle cx="4.4" cy="44.4" r="4.5" fill="#8a4fd0" opacity="0.9"/>
<circle cx="93.5" cy="25" r="3.2" fill="#8a4fd0" opacity="0.9"/>
<circle cx="97.7" cy="35.4" r="3" fill="#8a4fd0" opacity="0.9"/>
<circle cx="104.7" cy="29.5" r="2.5" fill="#8a4fd0" opacity="0.9"/>
<g font-family="Liberation Sans" font-weight="bold" fill="#f2f2f2">
<text x="1" y="29" font-size="7.3" textLength="34">AMERICA</text>
<text x="104" y="32.7" font-size="7.3" textLength="28">EUROPE</text>
<text x="182" y="26" font-size="7.3">AS</text>
<text x="105" y="81.6" font-size="7.3" textLength="26.6">AFRICA</text>
<text x="18" y="102" font-size="7.3" textLength="61">SOUTH AMERICA</text>
</g>
<g font-family="Liberation Sans" font-weight="bold" fill="#a9b3c6">
<text x="42" y="54" font-size="7.2" textLength="29.6">Atlantic</text>
<text x="46" y="62" font-size="7.2" textLength="23">Ocean</text>
<text x="156.6" y="103.3" font-size="7" textLength="23.4">Indian</text>
<text x="157" y="110.7" font-size="7" textLength="23">Ocean</text>
</g>
<g font-family="Liberation Sans" fill="#ececec" font-size="5.6">
<text x="16.8" y="107.3" textLength="137">© 2026 TomTom, Earthstar Geographics SIO, © 2026</text>
<text x="48.7" y="113.5" textLength="57.8">Microsoft Corporation,</text>
<text x="107.7" y="113.5" fill="#c0c8f0" text-decoration="underline" textLength="47">© OpenStreetMap</text>
<text x="11.7" y="111.8" font-size="4.8" textLength="33">Microsoft Bing</text>
</g>
<rect x="3" y="105" width="3.6" height="3.6" fill="#f25022"/><rect x="6.9" y="105" width="3.6" height="3.6" fill="#7fba00"/><rect x="3" y="108.9" width="3.6" height="3.6" fill="#00a4ef"/><rect x="6.9" y="108.9" width="3.6" height="3.6" fill="#ffb900"/>
</g></svg>

</div><div class="a" style="left:809px;top:92px;width:9px;height:427px;background:#fdfcfd"></div>
<div class="a" style="left:811px;top:98px;width:6px;height:371px;border-radius:3px;background:#8a8886"></div>
<div class="a" style="left:29px;top:510px;width:789px;height:34px;background:#f3f0f0"></div>
<div class="a" style="left:29px;top:510px;width:789px;height:9px;background:#fdfcfd"></div>
<div class="a" style="left:29px;top:512px;width:731px;height:5px;border-radius:3px;background:#8a8886"></div>
<svg style="left:37px;top:523px" width="16" height="13" viewBox="0 0 16 13"><rect x="0.5" y="0.5" width="15" height="9" fill="none" stroke="#444"/><path d="M6 12h4M8 9.5v2.5" stroke="#444"/></svg>
<div class="a" style="left:37px;top:539px;width:17px;height:2px;background:#117865"></div>
<svg style="left:71px;top:522px" width="10" height="15" viewBox="0 0 10 15"><rect x="0.5" y="0.5" width="9" height="14" rx="1.5" fill="none" stroke="#555"/><circle cx="5" cy="12" r="0.7" fill="#555"/></svg>
<svg style="left:96px;top:528px" width="4" height="6" viewBox="0 0 4 6"><path d="M3.5 0.5l-3 2.5 3 2.5" fill="none" stroke="#c0c0c0"/></svg>
<svg style="left:112px;top:528px" width="4" height="6" viewBox="0 0 4 6"><path d="M0.5 0.5l3 2.5-3 2.5" fill="none" stroke="#c0c0c0"/></svg>
<div class="a" style="left:120px;top:519px;width:55px;height:25px;background:#fff;border-bottom:2px solid #117865"></div>
<div class="a" style="left:120px;top:527px;width:55px;text-align:center;font-size:8.5px;color:#252423">Page 1</div>
<div class="a" style="left:175px;top:519px;width:28px;height:25px;background:#1b8562"></div>
<svg style="left:184px;top:525px" width="10" height="10" viewBox="0 0 10 10"><path d="M5 0.5v9M0.5 5h9" stroke="#fff" stroke-width="2"/></svg>
<div class="a" style="left:818px;top:92px;width:23.5px;height:427px;background:#8a43c4"></div>
<svg style="left:825px;top:100px" width="10" height="9" viewBox="0 0 10 9"><path d="M5 0.5l-4 4 4 4M9 0.5l-4 4 4 4" fill="none" stroke="#fff" stroke-width="1.2"/></svg>
<svg style="left:827px;top:121px" width="10" height="9" viewBox="0 0 10 9"><path d="M9.5 0.5v8l-4.5-3h-4.5v-2h4.5z" fill="none" stroke="#fff" stroke-width="1.1"/></svg>
<div class="a" style="left:830px;top:151px;font-size:10px;font-weight:bold;color:#fff;transform:translate(-50%,-50%) rotate(90deg);white-space:nowrap;margin-left:0">Filters</div>
<div class="a" style="left:842px;top:92px;width:130px;height:452px;background:#f3f0f0"></div>
<div class="a" style="left:841px;top:519px;width:1px;height:25px;background:#e1dfdd"></div>
<div class="a" style="left:971px;top:92px;width:1px;height:452px;background:#e1dfdd"></div>
<div class="a" style="left:848px;top:100px;font-size:11.8px;color:#252423">Visualizations</div>
<svg style="left:956px;top:102px" width="10" height="9" viewBox="0 0 10 9"><path d="M1 0.5l4 4-4 4M5 0.5l4 4-4 4" fill="none" stroke="#444" stroke-width="1"/></svg>
<div class="a" style="left:848px;top:119.5px;font-size:9px;color:#605e5c">Build visual</div>
<div class="a" style="left:848px;top:133px;width:22px;height:22px;background:#d8d6d8"></div>
<svg style="left:851px;top:135px" width="17" height="17" viewBox="0 0 17 17"><path d="M1 1h13" stroke="#555" stroke-width="1"/><rect x="1" y="3.5" width="15" height="5" fill="#19875f"/><rect x="1" y="10.5" width="15" height="5" fill="#19875f"/><path d="M1 3.5h15M1 8.5h15M1 10.5h15M1 15.5h15" stroke="#444" stroke-width="0.6" stroke-dasharray="1 1"/></svg>
<svg style="left:898px;top:135px" width="18" height="19" viewBox="0 0 18 19"><path d="M1 1h7l4 4v4M1 1v17h6" fill="none" stroke="#333" stroke-width="1"/><path d="M8 1v4h4" fill="none" stroke="#333" stroke-width="1"/><path d="M7 18c2 0 3-1 3.5-3l6-7-1-1-6.5 6.5c-1.5.5-2 2-2 4.5z" fill="none" stroke="#333" stroke-width="1"/></svg>
<div class="a" style="left:846px;top:163.5px;width:122px;height:1px;background:#e1dfdd"></div>
<svg style="left:852px;top:156px" width="14" height="8" viewBox="0 0 14 8"><path d="M0 8l7-7 7 7" fill="#f3f0f0" stroke="#d0cecc" stroke-width="1"/></svg>
<svg style="left:849.2px;top:172.9px" width="14" height="14" viewBox="0 0 14 14"><path d="M1 1v12h12" fill="none" stroke="#3c3c3c"/><rect x="2.5" y="2" width="5" height="3" fill="#4a90d9" stroke="#3c3c3c" stroke-width="0.5"/><rect x="2.5" y="6" width="9" height="2.5" fill="#bbb" stroke="#3c3c3c" stroke-width="0.5"/><rect x="2.5" y="9.5" width="7" height="2.5" fill="none" stroke="#3c3c3c" stroke-width="0.7"/></svg>
<svg style="left:869.3px;top:172.9px" width="14" height="14" viewBox="0 0 14 14"><path d="M1 1v12h12" fill="none" stroke="#3c3c3c"/><rect x="3" y="4" width="2.2" height="8" fill="#4a90d9" stroke="#3c3c3c" stroke-width="0.5"/><rect x="6.5" y="6" width="2.2" height="6" fill="none" stroke="#3c3c3c" stroke-width="0.7"/><rect x="10" y="3" width="2.2" height="9" fill="none" stroke="#3c3c3c" stroke-width="0.7"/></svg>
<svg style="left:889.6px;top:172.9px" width="14" height="14" viewBox="0 0 14 14"><path d="M1 1v12h12" fill="none" stroke="#3c3c3c"/><rect x="2" y="2" width="10" height="3" fill="#4a90d9"/><rect x="2" y="6" width="6" height="2.5" fill="#bbb" stroke="#3c3c3c" stroke-width="0.5"/><rect x="2" y="9.5" width="8" height="2.5" fill="none" stroke="#3c3c3c" stroke-width="0.7"/></svg>
<svg style="left:909.7px;top:172.9px" width="14" height="14" viewBox="0 0 14 14"><path d="M1 1v12h12" fill="none" stroke="#3c3c3c"/><rect x="2.5" y="2" width="3" height="10" fill="#4a90d9"/><rect x="6" y="6" width="2.5" height="6" fill="none" stroke="#3c3c3c" stroke-width="0.7"/><rect x="9.5" y="4" width="2.5" height="8" fill="none" stroke="#3c3c3c" stroke-width="0.7"/></svg>
<svg style="left:929.8px;top:172.9px" width="14" height="14" viewBox="0 0 14 14"><path d="M1 1v12h12" fill="none" stroke="#3c3c3c"/><rect x="2" y="2" width="10" height="3" fill="#4a90d9" stroke="#3c3c3c" stroke-width="0.5"/><rect x="2" y="6" width="10" height="2.5" fill="none" stroke="#3c3c3c" stroke-width="0.7"/><rect x="2" y="9.5" width="10" height="2.5" fill="none" stroke="#3c3c3c" stroke-width="0.7"/></svg>
<svg style="left:949.7px;top:172.9px" width="14" height="14" viewBox="0 0 14 14"><path d="M1 1v12h12" fill="none" stroke="#3c3c3c"/><rect x="2.5" y="2" width="3" height="10" fill="#4a90d9" stroke="#3c3c3c" stroke-width="0.5"/><rect x="6" y="2" width="2.5" height="10" fill="none" stroke="#3c3c3c" stroke-width="0.7"/><rect x="9.5" y="2" width="2.5" height="10" fill="none" stroke="#3c3c3c" stroke-width="0.7"/></svg>
<svg style="left:849.2px;top:192.4px" width="14" height="14" viewBox="0 0 14 14"><path d="M1 1v12h12" fill="none" stroke="#3c3c3c"/><path d="M2 11l4-5 3 3 4-5M2 6l3 3 3-4 3 4 2-2" fill="none" stroke="#3c3c3c" stroke-width="0.8"/></svg>
<svg style="left:869.3px;top:192.4px" width="14" height="14" viewBox="0 0 14 14"><path d="M1 13l4-8 3 4 3-7 2 11z" fill="#4a90d9" stroke="#3c3c3c" stroke-width="0.6"/><path d="M1 13l4-5 3 3 3-2 2 4z" fill="#fff" opacity="0.6"/></svg>
<svg style="left:889.6px;top:192.4px" width="14" height="14" viewBox="0 0 14 14"><path d="M1 13v-9l4 4 4-5 4 4v6z" fill="none" stroke="#3c3c3c" stroke-width="0.7"/><path d="M1 4l4 5 4-6 4 5v-3l-4-4-4 5-4-4z" fill="#4a90d9"/></svg>
<svg style="left:909.7px;top:192.4px" width="14" height="14" viewBox="0 0 14 14"><rect x="1" y="1" width="12" height="12" fill="none" stroke="#3c3c3c" stroke-width="0.7"/><path d="M1 2v6l4 3 4-3 4 3v-9z" fill="#4a90d9"/></svg>
<svg style="left:929.8px;top:192.4px" width="14" height="14" viewBox="0 0 14 14"><path d="M1 1v12h12" fill="none" stroke="#3c3c3c"/><rect x="3" y="3" width="2.5" height="9" fill="#4a90d9" stroke="#3c3c3c" stroke-width="0.5"/><rect x="7" y="5" width="2.5" height="7" fill="none" stroke="#3c3c3c" stroke-width="0.7"/><path d="M2 10l3-3 3 2 4-6" fill="none" stroke="#3c3c3c" stroke-width="0.8"/></svg>
<svg style="left:949.7px;top:192.4px" width="14" height="14" viewBox="0 0 14 14"><path d="M1 1v12h12" fill="none" stroke="#3c3c3c"/><rect x="3" y="7" width="2.5" height="5" fill="#4a90d9" stroke="#3c3c3c" stroke-width="0.5"/><rect x="7" y="3" width="2.5" height="9" fill="none" stroke="#3c3c3c" stroke-width="0.7"/><path d="M2 10l3-4 3 2 4-5" fill="none" stroke="#3c3c3c" stroke-width="0.8"/></svg>
<svg style="left:849.2px;top:212.0px" width="14" height="14" viewBox="0 0 14 14"><path d="M1 1v12h12" fill="none" stroke="#3c3c3c"/><path d="M1 3l4 5 3-2 5 3v4h-12z" fill="#4a90d9"/><path d="M2 10c2-2 4 0 6-1s3-2 5-1" fill="none" stroke="#e8953a" stroke-width="1.2"/></svg>
<svg style="left:869.3px;top:212.0px" width="14" height="14" viewBox="0 0 14 14"><path d="M1 1v12h12" fill="none" stroke="#3c3c3c"/><rect x="3" y="6" width="2.5" height="6" fill="none" stroke="#3c3c3c" stroke-width="0.7"/><rect x="6" y="3" width="2.5" height="9" fill="#bbb" stroke="#3c3c3c" stroke-width="0.5"/><rect x="9" y="1" width="2.5" height="11" fill="#4a90d9" stroke="#3c3c3c" stroke-width="0.5"/></svg>
<svg style="left:889.6px;top:212.0px" width="14" height="14" viewBox="0 0 14 14"><path d="M1 1h12v3h-12z M3 5h8v3h-8z M5 9h4v4h-4z" fill="#4a90d9"/></svg>
<svg style="left:909.7px;top:212.0px" width="14" height="14" viewBox="0 0 14 14"><path d="M1 1v12h12" fill="none" stroke="#3c3c3c"/><circle cx="4" cy="10" r="1" fill="#222"/><circle cx="7" cy="6" r="0.9" fill="#4a90d9"/><circle cx="10" cy="3" r="1" fill="#222"/><circle cx="11" cy="9" r="0.9" fill="#4a90d9"/><circle cx="5" cy="5" r="0.8" fill="#4a90d9"/></svg>
<svg style="left:929.8px;top:212.0px" width="14" height="14" viewBox="0 0 14 14"><circle cx="7" cy="7" r="6" fill="none" stroke="#3c3c3c" stroke-width="1"/><path d="M7 7V1a6 6 0 0 1 4.5 10z" fill="#4a90d9"/></svg>
<svg style="left:949.7px;top:212.0px" width="14" height="14" viewBox="0 0 14 14"><circle cx="7" cy="7" r="5.5" fill="none" stroke="#4a90d9" stroke-width="2.5"/><path d="M7 1.5a5.5 5.5 0 0 1 5.5 5.5" fill="none" stroke="#3c3c3c" stroke-width="1" opacity="0.5"/></svg>
<svg style="left:849.2px;top:231.9px" width="14" height="14" viewBox="0 0 14 14"><rect x="1" y="1" width="12" height="12" fill="none" stroke="#3c3c3c" stroke-width="0.8"/><rect x="1.5" y="1.5" width="5" height="11" fill="#4a90d9"/><path d="M7 5h6M7 9h6M10 1v12" stroke="#3c3c3c" stroke-width="0.7"/></svg>
<svg style="left:869.3px;top:231.9px" width="14" height="14" viewBox="0 0 14 14"><circle cx="7" cy="6" r="5" fill="#dde" stroke="#3c3c3c" stroke-width="0.8"/><path d="M4 3c2 1 3 3 2 5M8 2c1 2 2 3 4 3" stroke="#3a9a3a" stroke-width="1.5" fill="none"/><path d="M4 13h6M7 11v2" stroke="#3c3c3c"/></svg>
<svg style="left:889.6px;top:231.9px" width="14" height="14" viewBox="0 0 14 14"><path d="M1 3l4-2 4 2 4-1v9l-4 2-4-2-4 2z" fill="#aaa" stroke="#3c3c3c" stroke-width="0.6"/><path d="M5 5l4 1v4l-4-1z" fill="#4a90d9"/></svg>
<svg style="left:909.7px;top:231.9px" width="14" height="14" viewBox="0 0 14 14"><path d="M7 0l6 13-6-3-6 3z" fill="#4a90d9"/></svg>
<svg style="left:929.8px;top:231.9px" width="14" height="14" viewBox="0 0 14 14"><path d="M1 11a6 6 0 0 1 12 0" fill="none" stroke="#3c3c3c" stroke-width="1.3"/><path d="M3 8a5 5 0 0 1 8 0" fill="none" stroke="#4a90d9" stroke-width="1.5"/><path d="M7 11l3-3" stroke="#333" stroke-width="1"/></svg>
<svg style="left:949.7px;top:231.9px" width="14" height="14" viewBox="0 0 14 14"><rect x="3" y="4" width="10" height="9" fill="none" stroke="#3c3c3c" stroke-width="0.7"/><text x="5" y="11" font-size="5" fill="#4a90d9" font-family="Liberation Sans">123</text><path d="M4 0l-3 4h2l-1 3 4-4h-2l1-3z" fill="#f5a623"/></svg>
<svg style="left:849.2px;top:252.3px" width="14" height="14" viewBox="0 0 14 14"><rect x="0.5" y="2" width="13" height="10" fill="none" stroke="#3c3c3c" stroke-width="0.8"/><text x="2" y="9.5" font-size="5.5" fill="#4a90d9" font-family="Liberation Sans">123</text></svg>
<svg style="left:869.3px;top:252.3px" width="14" height="14" viewBox="0 0 14 14"><rect x="0.5" y="1" width="13" height="12" fill="none" stroke="#3c3c3c" stroke-width="0.8"/><path d="M3 4h8M3 7h6M3 10h7" stroke="#4a90d9" stroke-width="1.2"/></svg>
<svg style="left:889.6px;top:252.3px" width="14" height="14" viewBox="0 0 14 14"><rect x="0.5" y="2" width="13" height="10" fill="none" stroke="#3c3c3c" stroke-width="0.8"/><path d="M3 8l2-3 2 3z" fill="#2e9e4f"/><path d="M8 5l2 3 2-3z" fill="#d13438"/></svg>
<svg style="left:909.7px;top:252.3px" width="14" height="14" viewBox="0 0 14 14"><rect x="0.5" y="1" width="10" height="10" fill="none" stroke="#3c3c3c" stroke-width="0.8"/><path d="M3 4h5M3 7h3" stroke="#3c3c3c"/><path d="M7 8h6l-2 3v3h-2v-3z" fill="#fff" stroke="#3c3c3c" stroke-width="0.8"/></svg>
<svg style="left:929.8px;top:252.3px" width="14" height="14" viewBox="0 0 14 14"><rect x="0.5" y="1" width="13" height="12" fill="none" stroke="#3c3c3c" stroke-width="0.8"/><path d="M0.5 5h13M0.5 9h13M5 1v12M9 1v12" stroke="#3c3c3c" stroke-width="0.7"/></svg>
<svg style="left:949.7px;top:252.3px" width="14" height="14" viewBox="0 0 14 14"><rect x="0.5" y="1" width="13" height="12" fill="#4a90d9" stroke="#3c3c3c" stroke-width="0.8"/><path d="M0.5 5h13M0.5 9h13M5 1v12M9 1v12" stroke="#fff" stroke-width="0.8"/></svg>
<svg style="left:849.2px;top:272.3px" width="14" height="14" viewBox="0 0 14 14"><text x="2" y="12" font-size="12" font-weight="bold" fill="#2b6cb0" font-family="Liberation Sans">R</text></svg>
<svg style="left:869.3px;top:272.3px" width="14" height="14" viewBox="0 0 14 14"><text x="0" y="12" font-size="11" font-weight="bold" fill="#2b6cb0" font-family="Liberation Sans">Py</text></svg>
<svg style="left:889.6px;top:272.3px" width="14" height="14" viewBox="0 0 14 14"><path d="M1 1v12" stroke="#3c3c3c"/><path d="M1 3h5M1 7h9M1 11h7" stroke="#3c3c3c" stroke-width="1"/><circle cx="11" cy="3" r="1.5" fill="#4a90d9"/></svg>
<svg style="left:909.7px;top:272.3px" width="14" height="14" viewBox="0 0 14 14"><rect x="1" y="5" width="4" height="4" fill="#4a90d9"/><rect x="9" y="1" width="4" height="3" fill="#4a90d9"/><rect x="9" y="5.5" width="4" height="3" fill="#4a90d9"/><rect x="9" y="10" width="4" height="3" fill="#4a90d9"/><path d="M5 7h4M7 2.5v9h2" fill="none" stroke="#3c3c3c"/></svg>
<svg style="left:929.8px;top:272.3px" width="14" height="14" viewBox="0 0 14 14"><path d="M1 1h12v8h-7l-3 3v-3h-2z" fill="none" stroke="#4a90d9" stroke-width="1"/></svg>
<svg style="left:949.7px;top:272.3px" width="14" height="14" viewBox="0 0 14 14"><path d="M2 1h6l4 4v8h-10z" fill="none" stroke="#3c3c3c" stroke-width="0.8"/><path d="M4 7h6M4 9h6M4 11h4" stroke="#4a90d9" stroke-width="0.8"/></svg>
<svg style="left:849.2px;top:292.4px" width="14" height="14" viewBox="0 0 14 14"><path d="M3 1h8v4a4 4 0 0 1-8 0z" fill="none" stroke="#2b6cb0" stroke-width="1.2"/><path d="M3 2h-2v2c0 1 1 2 2 2M11 2h2v2c0 1-1 2-2 2M7 9v2M4 13h6" fill="none" stroke="#2b6cb0" stroke-width="1.2"/></svg>
<svg style="left:869.3px;top:292.4px" width="14" height="14" viewBox="0 0 14 14"><path d="M2 1h6l4 4v8h-10z" fill="none" stroke="#3c3c3c" stroke-width="0.8"/><rect x="4" y="9" width="1.5" height="3" fill="#333"/><rect x="6.5" y="7" width="1.5" height="5" fill="#333"/><rect x="9" y="5" width="1.5" height="7" fill="#333"/></svg>
<svg style="left:889.6px;top:292.4px" width="14" height="14" viewBox="0 0 14 14"><rect x="3" y="3" width="9" height="10" fill="none" stroke="#3c3c3c" stroke-width="0.7"/><path d="M4 0l-3 4h2l-1 3 4-4h-2l1-3z" fill="#f5a623"/><path d="M7 8h6l-2 3v3h-2v-3z" fill="#fff" stroke="#3c3c3c" stroke-width="0.8"/></svg>
<svg style="left:909.7px;top:292.4px" width="14" height="14" viewBox="0 0 14 14"><rect x="3" y="3" width="9" height="10" fill="none" stroke="#3c3c3c" stroke-width="0.7"/><path d="M4 0l-3 4h2l-1 3 4-4h-2l1-3z" fill="#f5a623"/><text x="5" y="10" font-size="6" fill="#4a90d9" font-family="Liberation Sans">A</text><path d="M7 8h6l-2 3v3h-2v-3z" fill="#fff" stroke="#3c3c3c" stroke-width="0.8"/></svg>
<svg style="left:929.8px;top:292.4px" width="14" height="14" viewBox="0 0 14 14"><rect x="3" y="3" width="9" height="10" fill="none" stroke="#3c3c3c" stroke-width="0.7"/><path d="M4 0l-3 4h2l-1 3 4-4h-2l1-3z" fill="#f5a623"/><path d="M5 8h3" stroke="#3c3c3c"/><path d="M7 8h6l-2 3v3h-2v-3z" fill="#fff" stroke="#3c3c3c" stroke-width="0.8"/></svg>
<svg style="left:949.7px;top:292.4px" width="14" height="14" viewBox="0 0 14 14"><rect x="0.5" y="2" width="13" height="10" fill="none" stroke="#3c3c3c" stroke-width="0.8"/><path d="M1 11l4-4 3 3 2-2 3 3z" fill="#4a90d9"/><circle cx="10" cy="5" r="1.2" fill="#4a90d9"/></svg>
<svg style="left:849.2px;top:312.5px" width="14" height="14" viewBox="0 0 14 14"><rect x="1" y="2" width="11" height="11" fill="none" stroke="#2b6cb0" stroke-width="1"/><path d="M2 1h3v4l-1.5 2-1.5-2z" fill="#d9534f"/><path d="M5 10l5-5" stroke="#4a90d9" stroke-width="1.2"/><circle cx="12" cy="12" r="1.5" fill="#e8823a"/></svg>
<svg style="left:869.3px;top:312.5px" width="14" height="14" viewBox="0 0 14 14"><path d="M7 1l6 6-6 6-6-6z" fill="none" stroke="#9b4fd0" stroke-width="1.2"/><path d="M4 4l6 6M10 4l-6 6" stroke="#9b4fd0" stroke-width="1"/></svg>
<svg style="left:889.6px;top:312.5px" width="14" height="14" viewBox="0 0 14 14"><path d="M1 2h6l5 5-5 5h-6l5-5z" fill="none" stroke="#4a90d9" stroke-width="1.2"/></svg>
<svg style="left:909.7px;top:312.5px" width="14" height="14" viewBox="0 0 14 14"><circle cx="3" cy="7" r="0.8" fill="#555"/><circle cx="7" cy="7" r="0.8" fill="#555"/><circle cx="11" cy="7" r="0.8" fill="#555"/></svg>
<div class="a" style="left:846px;top:333px;width:122px;height:1px;background:#e1dfdd"></div>
<div class="a" style="left:851px;top:340px;font-size:9px;color:#605e5c">Values</div>
<div class="a" style="left:845.3px;top:354.6px;width:121.3px;height:20px;background:#fbfafb;border:1px dashed #dcdadb;border-radius:2px"></div>
<div class="a" style="left:852px;top:359px;font-size:9px;color:#605e5c">Add data fields here</div>
<div class="a" style="left:851px;top:383px;font-size:9px;font-weight:bold;color:#484644">Drill through</div>
<div class="a" style="left:851px;top:401px;font-size:9px;color:#605e5c">Cross-report</div>
<div class="a" style="left:932.5px;top:400.8px;width:23px;height:11px;border-radius:6px;border:1px solid #555;background:#fff"></div>
<div class="a" style="left:935.5px;top:403.5px;width:5.5px;height:5.5px;border-radius:50%;background:#444"></div>
<div class="a" style="left:942px;top:402.5px;font-size:6px;color:#666">Off</div>
<div class="a" style="left:851px;top:420.5px;font-size:9px;color:#605e5c">Keep all filters</div>
<div class="a" style="left:932.5px;top:420px;width:23px;height:11px;border-radius:6px;background:#117865"></div>
<div class="a" style="left:947.5px;top:422.5px;width:6px;height:6px;border-radius:50%;background:#fff"></div>
<div class="a" style="left:935.5px;top:421.5px;font-size:7px;font-weight:bold;color:#fff">On</div>
<div class="a" style="left:845.3px;top:439.4px;width:121.3px;height:18px;background:#fbfafb;border:1px dashed #dcdadb;border-radius:2px"></div>
<div class="a" style="left:851px;top:443px;font-size:9px;color:#605e5c">Add drill-through fields here</div>
<div class="a" style="left:972px;top:92px;width:128px;height:452px;background:#f3f0f0"></div>
<div class="a" style="left:977.7px;top:99.5px;font-size:10.8px;font-weight:bold;color:#252423">Data</div>
<svg style="left:1086px;top:102px" width="10" height="9" viewBox="0 0 10 9"><path d="M1 0.5l4 4-4 4M5 0.5l4 4-4 4" fill="none" stroke="#444" stroke-width="1"/></svg>
<div class="a" style="left:974.8px;top:124.7px;width:122.5px;height:17px;background:#fff;border:1px solid #d6d4d4;border-bottom-color:#a8a6a6;border-radius:3px"></div>
<svg style="left:982px;top:127px" width="12" height="12" viewBox="0 0 12 12"><circle cx="5" cy="5" r="4" fill="none" stroke="#555" stroke-width="1"/><path d="M8 8l3.5 3.5" stroke="#555" stroke-width="1.1"/></svg>
<div class="a" style="left:999px;top:128.5px;font-size:9.2px;color:#707070">Search</div>
<div class="a" style="left:1092px;top:147.4px;width:6px;height:137px;background:#858382"></div>
<svg style="left:981px;top:153px" width="9" height="6" viewBox="0 0 9 6"><path d="M0.5 0.5l4 4 4-4" fill="none" stroke="#555" stroke-width="1"/></svg>
<svg style="left:992px;top:151.5px" width="10" height="10" viewBox="0 0 10 10"><rect x="0.5" y="0.5" width="9" height="9" rx="1.5" fill="none" stroke="#555"/><path d="M0.5 3.5h9M0.5 6.5h9M3.5 0.5v9M6.5 0.5v9" stroke="#555" stroke-width="0.7"/></svg>
<div class="a" style="left:1005.5px;top:151px;font-size:8.7px;color:#3b3a39">AM_Sales</div>
<div class="a" style="left:972px;top:165px;width:120px;height:373.5px;overflow:hidden">
<div class="a" style="left:31px;top:4.6px;width:9px;height:9px;border:1px solid #a8a6a5;border-radius:1.5px;background:#fbfafa"></div>
<svg style="left:45.5px;top:4.1px" width="10" height="10" viewBox="0 0 10 10"><rect x="0.6" y="0.6" width="8.8" height="8.8" rx="2.2" fill="#f0eded" stroke="#6a6866" stroke-width="1.1"/><path d="M2.3 3.2h5.4M2.3 5h5.4M2.3 6.8h5.4" stroke="#444" stroke-width="0.8"/></svg>
<div class="a" style="left:58.5px;top:3.6px;font-size:8.7px;color:#484644;white-space:nowrap">Bulk order</div>
<div class="a" style="left:31px;top:21.8px;width:9px;height:9px;border:1px solid #a8a6a5;border-radius:1.5px;background:#fbfafa"></div>
<div class="a" style="left:58.5px;top:20.8px;font-size:8.7px;color:#484644;white-space:nowrap">CustomerKey</div>
<div class="a" style="left:31px;top:38.9px;width:9px;height:9px;border:1px solid #a8a6a5;border-radius:1.5px;background:#fbfafa"></div>
<svg style="left:45.5px;top:38.4px" width="10" height="10" viewBox="0 0 10 10"><rect x="0.6" y="0.6" width="8.8" height="8.8" rx="2.2" fill="#f0eded" stroke="#6a6866" stroke-width="1.1"/><path d="M2.3 3.2h5.4M2.3 5h5.4M2.3 6.8h5.4" stroke="#444" stroke-width="0.8"/></svg>
<div class="a" style="left:58.5px;top:37.9px;font-size:8.7px;color:#484644;white-space:nowrap">Dynamic profi...</div>
<div class="a" style="left:31px;top:56.1px;width:9px;height:9px;border:1px solid #a8a6a5;border-radius:1.5px;background:#fbfafa"></div>
<svg style="left:45.5px;top:55.6px" width="10" height="10" viewBox="0 0 10 10"><rect x="0.6" y="0.6" width="8.8" height="8.8" rx="2.2" fill="#f0eded" stroke="#6a6866" stroke-width="1.1"/><path d="M2.3 3.2h5.4M2.3 5h5.4M2.3 6.8h5.4" stroke="#444" stroke-width="0.8"/></svg>
<div class="a" style="left:58.5px;top:55.1px;font-size:8.7px;color:#484644;white-space:nowrap">Dynamic Profi...</div>
<div class="a" style="left:31px;top:73.2px;width:9px;height:9px;border:1px solid #a8a6a5;border-radius:1.5px;background:#fbfafa"></div>
<svg style="left:45.5px;top:72.7px" width="10" height="10" viewBox="0 0 10 10"><rect x="0.6" y="0.6" width="8.8" height="8.8" rx="2.2" fill="#f0eded" stroke="#6a6866" stroke-width="1.1"/><path d="M2.3 3.2h5.4M2.3 5h5.4M2.3 6.8h5.4" stroke="#444" stroke-width="0.8"/></svg>
<div class="a" style="left:58.5px;top:72.2px;font-size:8.7px;color:#484644;white-space:nowrap">High ticket or...</div>
<div class="a" style="left:31px;top:90.4px;width:9px;height:9px;border:1px solid #a8a6a5;border-radius:1.5px;background:#fbfafa"></div>
<div class="a" style="left:58.5px;top:89.4px;font-size:8.7px;color:#484644;white-space:nowrap">OrderDate</div>
<div class="a" style="left:31px;top:107.6px;width:9px;height:9px;border:1px solid #a8a6a5;border-radius:1.5px;background:#fbfafa"></div>
<div class="a" style="left:45px;top:106.1px;font-size:10px;color:#444">Σ</div>
<div class="a" style="left:58.5px;top:106.6px;font-size:8.7px;color:#484644;white-space:nowrap">OrderLineItem</div>
<div class="a" style="left:31px;top:124.7px;width:9px;height:9px;border:1px solid #a8a6a5;border-radius:1.5px;background:#fbfafa"></div>
<div class="a" style="left:58.5px;top:123.7px;font-size:8.7px;color:#484644;white-space:nowrap">OrderNumber</div>
<div class="a" style="left:31px;top:141.9px;width:9px;height:9px;border:1px solid #a8a6a5;border-radius:1.5px;background:#fbfafa"></div>
<div class="a" style="left:45px;top:140.4px;font-size:10px;color:#444">Σ</div>
<div class="a" style="left:58.5px;top:140.9px;font-size:8.7px;color:#484644;white-space:nowrap">OrderQuantity</div>
<div class="a" style="left:31px;top:159.0px;width:9px;height:9px;border:1px solid #a8a6a5;border-radius:1.5px;background:#fbfafa"></div>
<svg style="left:45.5px;top:158.5px" width="10" height="10" viewBox="0 0 10 10"><rect x="0.6" y="0.6" width="8.8" height="8.8" rx="2.2" fill="#f0eded" stroke="#6a6866" stroke-width="1.1"/><path d="M2.3 3.2h5.4M2.3 5h5.4M2.3 6.8h5.4" stroke="#444" stroke-width="0.8"/></svg>
<div class="a" style="left:58.5px;top:158.0px;font-size:8.7px;color:#484644;white-space:nowrap">Previous mon...</div>
<div class="a" style="left:31px;top:176.2px;width:9px;height:9px;border:1px solid #a8a6a5;border-radius:1.5px;background:#fbfafa"></div>
<div class="a" style="left:58.5px;top:175.2px;font-size:8.7px;color:#484644;white-space:nowrap">ProductKey</div>
<div class="a" style="left:31px;top:193.4px;width:9px;height:9px;border:1px solid #a8a6a5;border-radius:1.5px;background:#fbfafa"></div>
<svg style="left:45.5px;top:192.9px" width="10" height="10" viewBox="0 0 10 10"><rect x="0.6" y="0.6" width="8.8" height="8.8" rx="2.2" fill="#f0eded" stroke="#6a6866" stroke-width="1.1"/><path d="M2.3 3.2h5.4M2.3 5h5.4M2.3 6.8h5.4" stroke="#444" stroke-width="0.8"/></svg>
<div class="a" style="left:58.5px;top:192.4px;font-size:8.7px;color:#484644;white-space:nowrap">Profit Targets</div>
<div class="a" style="left:31px;top:210.5px;width:9px;height:9px;border:1px solid #a8a6a5;border-radius:1.5px;background:#fbfafa"></div>
<svg style="left:45.5px;top:210.0px" width="10" height="10" viewBox="0 0 10 10"><rect x="0.6" y="0.6" width="8.8" height="8.8" rx="2.2" fill="#f0eded" stroke="#6a6866" stroke-width="1.1"/><path d="M2.3 3.2h5.4M2.3 5h5.4M2.3 6.8h5.4" stroke="#444" stroke-width="0.8"/></svg>
<div class="a" style="left:58.5px;top:209.5px;font-size:8.7px;color:#484644;white-space:nowrap">Profit ta...</div>
<svg style="left:100px;top:210.0px" width="10" height="9" viewBox="0 0 10 9"><path d="M5 0.7l4.3 7.8h-8.6z" fill="none" stroke="#d13438" stroke-width="0.9"/><path d="M5 3.5v2.3M5 6.6v0.8" stroke="#d13438" stroke-width="0.9"/></svg>
<div class="a" style="left:31px;top:227.7px;width:9px;height:9px;border:1px solid #a8a6a5;border-radius:1.5px;background:#fbfafa"></div>
<svg style="left:45px;top:227.2px" width="10" height="10" viewBox="0 0 10 10"><rect x="0.5" y="0.5" width="6" height="9" fill="none" stroke="#666"/><path d="M0.5 3.5h6M0.5 6.5h6" stroke="#666" stroke-width="0.7"/><rect x="5" y="4" width="4.5" height="5.5" fill="#f3f0f0" stroke="#666" stroke-width="0.8"/></svg>
<div class="a" style="left:58.5px;top:226.7px;font-size:8.7px;color:#484644;white-space:nowrap">Purchase Cost</div>
<div class="a" style="left:31px;top:244.8px;width:9px;height:9px;border:1px solid #a8a6a5;border-radius:1.5px;background:#fbfafa"></div>
<svg style="left:45px;top:244.3px" width="10" height="10" viewBox="0 0 10 10"><rect x="0.5" y="0.5" width="6" height="9" fill="none" stroke="#666"/><path d="M0.5 3.5h6M0.5 6.5h6" stroke="#666" stroke-width="0.7"/><rect x="5" y="4" width="4.5" height="5.5" fill="#f3f0f0" stroke="#666" stroke-width="0.8"/></svg>
<div class="a" style="left:58.5px;top:243.8px;font-size:8.7px;color:#484644;white-space:nowrap">Purchase Price</div>
<div class="a" style="left:31px;top:262.0px;width:9px;height:9px;border:1px solid #a8a6a5;border-radius:1.5px;background:#fbfafa"></div>
<div class="a" style="left:58.5px;top:261.0px;font-size:8.7px;color:#484644;white-space:nowrap">Source.Name</div>
<div class="a" style="left:31px;top:279.2px;width:9px;height:9px;border:1px solid #a8a6a5;border-radius:1.5px;background:#fbfafa"></div>
<svg style="left:45px;top:278.7px" width="10" height="10" viewBox="0 0 10 10"><rect x="0.5" y="0.5" width="9" height="9" rx="1.5" fill="none" stroke="#555"/><path d="M0.5 3h9" stroke="#555"/><path d="M2.5 5.5h5M2.5 7.5h5" stroke="#555" stroke-width="0.7"/></svg>
<svg style="left:21px;top:279.7px" width="5" height="8" viewBox="0 0 5 8"><path d="M0.5 0.5l3.5 3.5-3.5 3.5" fill="none" stroke="#555"/></svg>
<div class="a" style="left:58.5px;top:278.2px;font-size:8.7px;color:#484644;white-space:nowrap">StockDate</div>
<div class="a" style="left:31px;top:296.3px;width:9px;height:9px;border:1px solid #a8a6a5;border-radius:1.5px;background:#fbfafa"></div>
<div class="a" style="left:58.5px;top:295.3px;font-size:8.7px;color:#484644;white-space:nowrap">TerritoryKey</div>
<div class="a" style="left:31px;top:313.5px;width:9px;height:9px;border:1px solid #a8a6a5;border-radius:1.5px;background:#fbfafa"></div>
<svg style="left:45.5px;top:313.0px" width="10" height="10" viewBox="0 0 10 10"><rect x="0.6" y="0.6" width="8.8" height="8.8" rx="2.2" fill="#f0eded" stroke="#6a6866" stroke-width="1.1"/><path d="M2.3 3.2h5.4M2.3 5h5.4M2.3 6.8h5.4" stroke="#444" stroke-width="0.8"/></svg>
<div class="a" style="left:58.5px;top:312.5px;font-size:8.7px;color:#484644;white-space:nowrap">Total Cost</div>
<div class="a" style="left:31px;top:330.6px;width:9px;height:9px;border:1px solid #a8a6a5;border-radius:1.5px;background:#fbfafa"></div>
<svg style="left:45.5px;top:330.1px" width="10" height="10" viewBox="0 0 10 10"><rect x="0.6" y="0.6" width="8.8" height="8.8" rx="2.2" fill="#f0eded" stroke="#6a6866" stroke-width="1.1"/><path d="M2.3 3.2h5.4M2.3 5h5.4M2.3 6.8h5.4" stroke="#444" stroke-width="0.8"/></svg>
<div class="a" style="left:58.5px;top:329.6px;font-size:8.7px;color:#484644;white-space:nowrap">Total orders</div>
<div class="a" style="left:31px;top:347.8px;width:9px;height:9px;border:1px solid #a8a6a5;border-radius:1.5px;background:#fbfafa"></div>
<svg style="left:45.5px;top:347.3px" width="10" height="10" viewBox="0 0 10 10"><rect x="0.6" y="0.6" width="8.8" height="8.8" rx="2.2" fill="#f0eded" stroke="#6a6866" stroke-width="1.1"/><path d="M2.3 3.2h5.4M2.3 5h5.4M2.3 6.8h5.4" stroke="#444" stroke-width="0.8"/></svg>
<div class="a" style="left:58.5px;top:346.8px;font-size:8.7px;color:#484644;white-space:nowrap">Total Price</div>
<div class="a" style="left:31px;top:365.0px;width:9px;height:9px;border:1px solid #a8a6a5;border-radius:1.5px;background:#fbfafa"></div>
<svg style="left:45.5px;top:364.5px" width="10" height="10" viewBox="0 0 10 10"><rect x="0.6" y="0.6" width="8.8" height="8.8" rx="2.2" fill="#f0eded" stroke="#6a6866" stroke-width="1.1"/><path d="M2.3 3.2h5.4M2.3 5h5.4M2.3 6.8h5.4" stroke="#444" stroke-width="0.8"/></svg>
<div class="a" style="left:58.5px;top:364.0px;font-size:8.7px;color:#484644;white-space:nowrap">Total Profit</div>
</div>
<div class="a" style="left:0;top:544px;width:1100px;height:16px;background:#f3f0f0;border-top:1px solid #e1dfdd"></div>
<div class="a" style="left:3px;top:548.5px;font-size:8.4px;color:#605e5c">Page 1 of 1</div>
<div class="a" style="left:949px;top:552.5px;width:3px;height:1px;background:#444"></div>
<div class="a" style="left:955.5px;top:552.5px;width:71.5px;height:1px;background:#a0a0a0"></div>
<div class="a" style="left:986px;top:549px;width:2.7px;height:7px;background:#444"></div>
<div class="a" style="left:991px;top:551px;width:1px;height:3px;background:#777"></div>
<svg style="left:1031px;top:550px" width="6" height="6" viewBox="0 0 6 6"><path d="M3 0v6M0 3h6" stroke="#333" stroke-width="1"/></svg>
<div class="a" style="left:1046px;top:547.5px;font-size:9px;color:#8a8886">90%</div>
<svg style="left:1076px;top:549px" width="12" height="9" viewBox="0 0 12 9"><rect x="0.5" y="0.5" width="11" height="8" fill="none" stroke="#555"/><path d="M2 3V2h2M8 2h2v1M10 6v1H8M4 7H2V6" fill="none" stroke="#555" stroke-width="0.7"/></svg>
<div class="a" id="botline"></div>
</body></html>
